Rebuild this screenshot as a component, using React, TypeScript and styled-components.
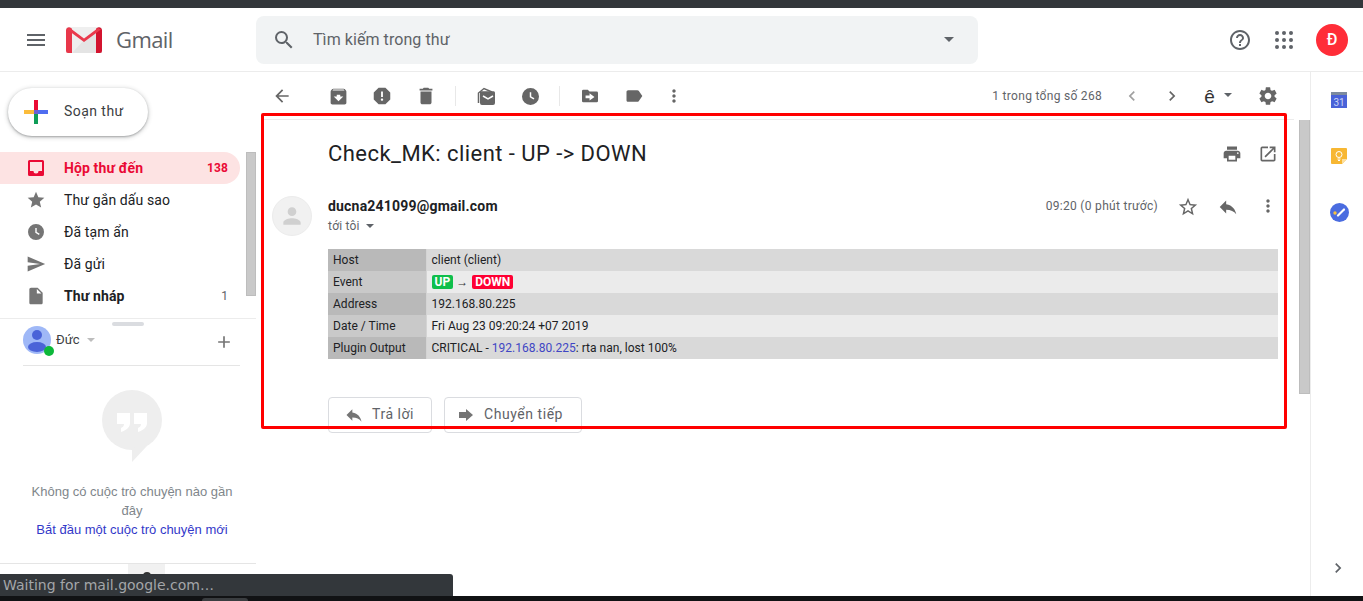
import React from "react";
import styled, { createGlobalStyle } from "styled-components";
import {
  MdMenu, MdSearch, MdHelpOutline, MdArrowBack, MdArchive, MdReport, MdDelete,
  MdLabel, MdMoreVert, MdChevronLeft, MdChevronRight, MdSettings, MdPrint, MdOpenInNew,
  MdStarBorder, MdReply, MdStar, MdSend, MdInsertDriveFile, MdAdd, MdPerson,
} from "react-icons/md";

const Global = createGlobalStyle`
  html, body { margin: 0; padding: 0; height: 100%; background: #fff; overflow: hidden; }
  body { font-family: Roboto, "Liberation Sans", sans-serif; color: #202124; }
  * { box-sizing: border-box; }
`;

const Page = styled.div`
  position: relative;
  width: 1363px;
  height: 601px;
  display: flex;
  flex-direction: column;
  overflow: hidden;
`;
const ChromeTop = styled.div`height: 8px; background: #33373b; flex: none;`;
const ChromeBottom = styled.div`
  height: 5px; background: #111214; flex: none; display: flex; align-items: flex-end; padding-left: 202px;
`;
const ChromeTab = styled.div`width: 46px; height: 3px; background: #3a3d40; border-radius: 3px 3px 0 0;`;

const Header = styled.header`
  height: 64px;
  flex: none;
  display: flex;
  align-items: center;
  border-bottom: 1px solid #ececec;
`;
const MenuSlot = styled.div`
  width: 66px; display: flex; justify-content: center; padding-left: 6px; color: #5f6368; font-size: 24px;
  svg { display: block; }
`;
const Wordmark = styled.span`
  font-family: "Open Sans", Roboto, sans-serif;
  font-size: 22px;
  line-height: 28px;
  margin-top: -2px;
  color: #5f6368;
  margin-left: 14px;
  width: 140px;
  letter-spacing: -0.6px;
`;
const SearchBox = styled.div`
  width: 722px; height: 48px; background: #f1f3f4; border-radius: 8px;
  display: flex; align-items: center; padding-left: 16px; color: #5f6368;
  svg { display: block; }
`;
const SearchText = styled.span`
  font-size: 16px; color: #5f6368; margin-left: 17px; flex: 1; letter-spacing: .07px;
`;
const Caret = styled.span<{ $size?: number; $color?: string }>`
  width: 0; height: 0; display: inline-block; flex: none;
  border-left: ${p => p.$size ?? 5}px solid transparent;
  border-right: ${p => p.$size ?? 5}px solid transparent;
  border-top: ${p => p.$size ?? 5}px solid ${p => p.$color ?? "#5f6368"};
`;
const SearchCaret = styled.span`margin-right: 24px; display: flex;`;
const HeaderRight = styled.div`
  margin-left: auto; display: flex; align-items: center; padding-right: 15px; color: #5f6368;
`;
const HeadIcon = styled.div`
  width: 44px; display: flex; justify-content: center; svg { display: block; }
`;
const UserBadge = styled.div`
  width: 32px; height: 32px; border-radius: 50%; background: #ff2d38; color: #fff; margin-left: 10px;
  display: flex; align-items: center; justify-content: center; font-size: 16px; font-weight: 500;
`;

const Body = styled.div`flex: 1; display: flex; min-height: 0;`;
const Sidebar = styled.aside`
  position: relative; width: 256px; flex: none; display: flex; flex-direction: column;
`;
const Compose = styled.div`
  margin: 16px 0 0 8px; width: 140px; height: 48px; border-radius: 24px; background: #fff;
  display: flex; align-items: center; padding-left: 16px; gap: 16px;
  box-shadow: 0 1px 2px rgba(60,64,67,.35), 0 1px 4px 1px rgba(60,64,67,.2);
  font-size: 14px; color: #3c4043; font-weight: 400; letter-spacing: .45px;
`;
const ComposeLabel = styled.span`margin-top: -2px;`;
const Nav = styled.nav`margin-top: 16px; display: flex; flex-direction: column; width: 240px;`;
const NavRow = styled.div<{ $active?: boolean; $bold?: boolean }>`
  height: 32px; display: flex; align-items: center; padding: 0 12px 0 28px; gap: 20px;
  border-radius: 0 16px 16px 0;
  font-size: 14px;
  letter-spacing: .12px;
  color: ${p => (p.$active ? "#ea0a35" : "#202124")};
  font-weight: ${p => (p.$active || p.$bold ? 700 : 400)};
  background: ${p => (p.$active ? "#fde3e3" : "transparent")};
  svg { display: block; flex: none; color: ${p => (p.$active ? "#ea0a35" : "#757575")}; }
`;
const NavCount = styled.span<{ $active?: boolean }>`
  margin-left: auto; font-size: 12px; color: ${p => (p.$active ? "#ea0a35" : "#5f6368")};
  font-weight: ${p => (p.$active ? 700 : 400)};
`;
const SideScroll = styled.div`
  position: absolute; left: 246px; top: 80px; width: 10px; height: 144px; background: #c9c9c9; border: 1px solid #bdbdbd;
`;
const Hangouts = styled.div`
  position: relative; margin-top: 6px; border-top: 1px solid #ececec; height: 47px;
  display: flex; align-items: flex-start; padding: 7px 22px 0 23px;
`;
const Grip = styled.div`
  position: absolute; left: 112px; top: 3px; width: 32px; height: 4px; border-radius: 2px; background: #dadce0;
`;
const UserPic = styled.div`
  position: relative; width: 28px; height: 28px; border-radius: 50%; background: #9fb8f7; flex: none;
`;
const Online = styled.span`
  position: absolute; left: 21px; top: 20px; width: 10px; height: 10px; border-radius: 50%; background: #0db83a;
`;
const ChatName = styled.span`
  font-size: 13px; margin-left: 5px; color: #3c4043; line-height: 15px; margin-top: 6px; margin-right: 7px;
`;
const CaretWrap = styled.span`display: flex; margin-top: 12px;`;
const AddWrap = styled.span`
  margin-left: auto; color: #757575; display: flex; margin-top: 6px; svg { display: block; }
`;
const ChatRule = styled.div`margin: 0 16px 0 23px; height: 1px; background: #e5e5e5;`;
const Empty = styled.div`
  flex: 1; display: flex; flex-direction: column; align-items: center; padding: 24px 0 0 8px;
  font-family: "Liberation Sans", Arial, sans-serif; font-size: 13px; line-height: 19px; text-align: center; color: #80868b;
`;
const EmptyText = styled.div`margin-top: 20px; width: 210px;`;
const EmptyLink = styled.div`color: #3338c9; white-space: nowrap;`;
const SideFooter = styled.div`
  height: 33px; border-top: 1px solid #e5e5e5; display: flex; justify-content: flex-start; padding-left: 128px;
`;
const FooterTab = styled.div`
  width: 37px; background: #f1f1f1; display: flex; justify-content: center; padding-top: 8px;
  &::after { content: ""; width: 8px; height: 8px; border-radius: 50%; background: #333; }
`;

const Main = styled.main`position: relative; flex: 1; min-width: 0; display: flex; flex-direction: column;`;
const Toolbar = styled.div`
  height: 47px; display: flex; align-items: center; padding: 1px 22px 0 4px; flex: none; color: #5f6368;
`;
const ToolSlot = styled.div<{ $w?: number; $ml?: number; $pr?: number; $c?: string }>`
  width: ${p => p.$w ?? 44}px; margin-left: ${p => p.$ml ?? 0}px; padding-right: ${p => p.$pr ?? 0}px; flex: none;
  display: flex; justify-content: center; align-items: center; gap: 9px; color: ${p => p.$c ?? "#666"};
  svg { display: block; }
`;
const ToolSep = styled.div<{ $ml: number; $mr: number }>`
  width: 1px; height: 20px; background: #e8e8e8; margin: 0 ${p => p.$mr}px 0 ${p => p.$ml}px; flex: none;
`;
const Pager = styled.span`
  margin-left: auto; margin-right: 10px; font-size: 12px; color: #5f6368; letter-spacing: .3px;
`;
const LangGlyph = styled.span`
  font-family: "Liberation Sans", sans-serif; font-size: 19px; color: #333; line-height: 18px; margin-top: 1px;
`;
const LangCaret = styled.span`display: flex; margin-top: -3px;`;
const Rule = styled.div`height: 1px; margin: 0 16px 0 5px; background: #ececec; flex: none;`;
const Thread = styled.div`flex: 1; min-height: 0; display: flex; flex-direction: column;`;
const SubjectRow = styled.div`
  display: flex; align-items: center; height: 28px; margin-top: 19px; padding: 0 24px 0 72px; flex: none;
`;
const Subject = styled.h1`
  margin: 1px 0 0; font-family: Roboto, sans-serif; font-weight: 400; font-size: 22px; line-height: 28px; color: #202124; flex: 1;
  letter-spacing: .45px;
`;
const MsgIcons = styled.div`display: flex; align-items: center; color: #666; margin-top: 2px; svg { display: block; }`;
const IconBox = styled.div<{ $w?: number }>`
  width: ${p => p.$w ?? 36}px; display: flex; justify-content: center; color: #666; svg { display: block; }
`;
const Message = styled.div`display: flex; padding: 29px 24px 0 16px; flex: none;`;
const Avatar = styled.div`
  width: 40px; height: 40px; border-radius: 50%; background: #f1f1f1; color: #d0d0d0;
  display: flex; align-items: center; justify-content: center; flex: none; border: 1px solid #ececec;
  svg { display: block; }
`;
const MsgBody = styled.div`margin-left: 16px; flex: 1; min-width: 0;`;
const MsgHead = styled.div`display: flex; align-items: flex-start; height: 40px;`;
const Sender = styled.div`flex: 1;`;
const SenderName = styled.div`font-size: 14px; font-weight: 700; line-height: 20px; color: #202124; letter-spacing: .2px;`;
const ToMe = styled.div`
  display: flex; align-items: center; gap: 6px; font-size: 12px; line-height: 20px; color: #5f6368; letter-spacing: .2px;
`;
const Time = styled.span`
  font-size: 12px; color: #5f6368; line-height: 20px; margin-right: 12px; letter-spacing: .3px;
`;
const MailTable = styled.table`
  margin: 13px 0 0; width: 950px; border-collapse: collapse; table-layout: fixed;
  font-size: 12px; color: #202124; letter-spacing: .02px;
`;
const HeadCell = styled.td<{ $odd: boolean }>`
  width: 98px; height: 22px; padding: 0 0 0 5px; border-right: 1px solid #d4d4d4;
  background: ${p => (p.$odd ? "#b9b9b9" : "#c9c9c9")};
`;
const ValueCell = styled.td<{ $odd: boolean }>`
  height: 22px; padding: 0 0 0 5px;
  background: ${p => (p.$odd ? "#d9d9d9" : "#ebebeb")};
`;
const Badge = styled.span<{ $c: string }>`
  display: inline-block; background: ${p => p.$c}; color: #fff; font-weight: 700; font-size: 12px;
  line-height: 14px; padding: 0 3px; border-radius: 2px;
`;
const Arrow = styled.span`
  font-size: 12px; margin: 0 4px 0 3px; font-family: "Liberation Sans", sans-serif; color: #333;
`;
const MailLink = styled.span`color: #3f46c4;`;
const Actions = styled.div`display: flex; gap: 12px; margin-top: 38px;`;
const ActionBtn = styled.div<{ $w: number; $pl: number }>`
  width: ${p => p.$w}px; height: 36px; border: 1px solid #dadce0; border-radius: 4px; background: #fff;
  display: flex; align-items: center; padding: 0 0 2px ${p => p.$pl}px; gap: 8px;
  font-size: 14px; color: #5f6368; font-weight: 400; letter-spacing: .55px;
  svg { display: block; color: #757575; flex: none; margin-top: 2px; }
`;
const MainScroll = styled.div`
  position: absolute; right: 0; top: 48px; width: 11px; height: 274px; background: #c9c9c9; border: 1px solid #bdbdbd; border-top: 0;
`;

const AddOns = styled.aside`
  width: 53px; flex: none; border-left: 1px solid #ececec; display: flex; flex-direction: column; align-items: center; padding: 18px 0 0 4px;
`;
const AddOnIcon = styled.div<{ $mt?: number }>`
  height: 20px; display: flex; align-items: center; justify-content: center; margin-top: ${p => p.$mt ?? 0}px;
  svg { display: block; }
`;
const Expand = styled.div`margin: auto 3px 18px 0; color: #5f6368; svg { display: block; }`;

const Highlight = styled.div`
  position: absolute; left: 261px; top: 113px; width: 1026px; height: 316px; border: 3px solid #ff0000; border-radius: 2px; pointer-events: none;
`;
const StatusBar = styled.div`
  position: absolute; left: 0; top: 574px; width: 453px; height: 22px; background: #33373b; border-radius: 0 3px 0 0;
  font-family: "DejaVu Sans", sans-serif; font-size: 14px; line-height: 22px; padding-left: 3px; color: #a3a6a9;
`;

const GmailLogo = () => (
  <svg width="36" height="26" viewBox="0 0 36 26" style={{ display: "block" }}>
    <path d="M2 0h32a2 2 0 0 1 2 2v24H0V2a2 2 0 0 1 2-2z" fill="#efefef" />
    <path d="M6 26l12-13 12-9 6 22z" fill="#e4e4e4" />
    <path d="M0 3a3 3 0 0 1 5-2l1 .8V26H2a2 2 0 0 1-2-2z" fill="#e8374a" />
    <path d="M36 3a3 3 0 0 0-5-2l-1 .8V26h4a2 2 0 0 0 2-2z" fill="#d3142f" />
    <path d="M4 1l14 10.5L32 1l3 1.500L18 15 1 2.500z" fill="#ea3a4d" />
  </svg>
);
const PlusMark = () => (
  <svg width="24" height="24" viewBox="0 0 24 24" style={{ display: "block", flex: "none" }}>
    <rect x="0" y="10" width="12" height="4" fill="#fbbc3b" />
    <rect x="12" y="10" width="12" height="4" fill="#4f6df0" />
    <rect x="10" y="14" width="4" height="10" fill="#0f9d58" />
    <rect x="10" y="0" width="4" height="12" fill="#ea0a35" />
    <rect x="10" y="10" width="4" height="4" fill="#6f5fd0" />
  </svg>
);
const InboxIcon = () => (
  <svg width="16" height="16" viewBox="0 0 16 16" fill="currentColor">
    <path fillRule="evenodd" d="M1.500 0h13A1.500 1.500 0 0 1 16 1.500v13a1.500 1.500 0 0 1-1.500 1.500h-13A1.500 1.500 0 0 1 0 14.500v-13A1.500 1.500 0 0 1 1.500 0zM2 2v9h3.500a2.500 2.500 0 0 0 5 0H14V2z" />
  </svg>
);
const ClockIcon = ({ s }: { s: number }) => (
  <svg width={s} height={s} viewBox="0 0 16 16" fill="currentColor">
    <path fillRule="evenodd" d="M8 0a8 8 0 1 1 0 16A8 8 0 0 1 8 0zm-.7 4v4.700l3.600 2.200.8-1.200-3-1.800V4z" />
  </svg>
);
const MailStackIcon = () => (
  <svg width="20" height="20" viewBox="0 0 20 20">
    <path d="M4 6a2 2 0 0 1 1.500-.7h12A1.500 1.500 0 0 1 19 7v10a2 2 0 0 1-2 2H6a2 2 0 0 1-2-2z" fill="currentColor" />
    <path d="M7 10l5 3 5-3" fill="none" stroke="#fff" strokeWidth="1.500" />
    <path d="M2.500 17V7L8 2.500l8 3.500" fill="none" stroke="currentColor" strokeWidth="1.500" />
  </svg>
);
const MoveIcon = () => (
  <svg width="16" height="16" viewBox="0 0 18 18" fill="currentColor">
    <path fillRule="evenodd" d="M1.500 2h5l2 2h8a1.500 1.500 0 0 1 1.500 1.500v9a1.500 1.500 0 0 1-1.500 1.500h-15A1.500 1.500 0 0 1 0 14.500v-11A1.500 1.500 0 0 1 1.500 2zM8.500 6v2.500H4v3h4.500V14L14 10z" />
  </svg>
);
const AppsIcon = () => (
  <svg width="18" height="18" viewBox="0 0 18 18" fill="currentColor">
    {[2, 9, 16].flatMap(y => [2, 9, 16].map(x => <circle key={x + "-" + y} cx={x} cy={y} r="2" />))}
  </svg>
);
const PersonIcon = () => (
  <svg width="28" height="28" viewBox="0 0 28 28" style={{ display: "block" }}>
    <circle cx="14" cy="9" r="5" fill="#4a63d8" />
    <ellipse cx="14" cy="21" rx="9" ry="5" fill="#4a63d8" />
  </svg>
);
const BubbleIcon = () => (
  <svg width="60" height="72" viewBox="0 0 60 72" style={{ display: "block" }}>
    <circle cx="30" cy="30" r="30" fill="#eeeeee" />
    <path d="M30 58v14l15-16z" fill="#eeeeee" />
    <path d="M15 23h13v10c0 4-3 7-9 9v-4c2-1 3-2 3-4h-7zM32 23h13v10c0 4-3 7-9 9v-4c2-1 3-2 3-4h-7z" fill="#fff" />
  </svg>
);
const CalendarIcon = () => (
  <svg width="16" height="16" viewBox="0 0 16 16">
    <rect x="0" y="0" width="16" height="4" fill="#7d8b9e" />
    <rect x="0" y="3" width="16" height="13" fill="#4a63d8" />
    <text x="8" y="13.500" textAnchor="middle" fontFamily="Roboto, sans-serif" fontSize="10" fill="#cdd6f6">31</text>
  </svg>
);
const KeepIcon = () => (
  <svg width="16" height="16" viewBox="0 0 16 16">
    <path d="M1 0h14a1 1 0 0 1 1 1v10l-5 5H1a1 1 0 0 1-1-1V1a1 1 0 0 1 1-1z" fill="#f7b733" />
    <path d="M11 16v-5h5z" fill="#fbe0a0" />
    <circle cx="8" cy="6.500" r="3" fill="none" stroke="#fff" strokeWidth="1" />
    <path d="M6.500 11h3M7 12.500h2" stroke="#fff" strokeWidth="1" />
  </svg>
);
const TasksIcon = () => (
  <svg width="19" height="19" viewBox="0 0 19 19">
    <circle cx="9.500" cy="9.500" r="9.500" fill="#4a6ce0" />
    <circle cx="5" cy="10" r="1.700" fill="#f7c23c" />
    <path d="M8 12.500L14 6.500" stroke="#fff" strokeWidth="2.200" strokeLinecap="round" />
  </svg>
);
const ForwardBlock = () => (
  <svg width="20" height="20" viewBox="0 0 20 20" fill="currentColor">
    <path d="M3 7h7V4l7 6-7 6v-3H3z" />
  </svg>
);

const rows: [string, React.ReactNode][] = [
  ["Host", "client (client)"],
  ["Event", <><Badge $c="#0fbf4b">UP</Badge><Arrow>→</Arrow><Badge $c="#ff0033">DOWN</Badge></>],
  ["Address", "192.168.80.225"],
  ["Date / Time", "Fri Aug 23 09:20:24 +07 2019"],
  ["Plugin Output", <>CRITICAL - <MailLink>192.168.80.225</MailLink>: rta nan, lost 100%</>],
];

export default function App() {
  return (
    <Page>
      <Global />
      <ChromeTop />
      <Header>
        <MenuSlot><MdMenu size={24} /></MenuSlot>
        <GmailLogo />
        <Wordmark>Gmail</Wordmark>
        <SearchBox>
          <MdSearch size={24} />
          <SearchText>Tìm kiếm trong thư</SearchText>
          <SearchCaret><Caret /></SearchCaret>
        </SearchBox>
        <HeaderRight>
          <HeadIcon><MdHelpOutline size={24} /></HeadIcon>
          <HeadIcon><AppsIcon /></HeadIcon>
          <UserBadge>Đ</UserBadge>
        </HeaderRight>
      </Header>
      <Body>
        <Sidebar>
          <Compose><PlusMark /><ComposeLabel>Soạn thư</ComposeLabel></Compose>
          <Nav>
            <NavRow $active><InboxIcon />Hộp thư đến<NavCount $active>138</NavCount></NavRow>
            <NavRow><MdStar size={20} style={{ margin: "0 -2px" }} />Thư gắn dấu sao</NavRow>
            <NavRow><ClockIcon s={16} />Đã tạm ẩn</NavRow>
            <NavRow><MdSend size={20} style={{ margin: "0 -2px" }} />Đã gửi</NavRow>
            <NavRow $bold><MdInsertDriveFile size={20} style={{ margin: "0 -2px" }} />Thư nháp<NavCount>1</NavCount></NavRow>
          </Nav>
          <SideScroll />
          <Hangouts>
            <Grip />
            <UserPic><PersonIcon /><Online /></UserPic>
            <ChatName>Đức</ChatName>
            <CaretWrap><Caret $size={4} $color="#bdbdbd" /></CaretWrap>
            <AddWrap><MdAdd size={20} /></AddWrap>
          </Hangouts>
          <ChatRule />
          <Empty>
            <BubbleIcon />
            <EmptyText>Không có cuộc trò chuyện nào gần đây</EmptyText>
            <EmptyLink>Bắt đầu một cuộc trò chuyện mới</EmptyLink>
          </Empty>
          <SideFooter><FooterTab /></SideFooter>
        </Sidebar>
        <Main>
          <Toolbar>
            <ToolSlot><MdArrowBack size={20} /></ToolSlot>
            <ToolSlot $ml={12}><MdArchive size={21} /></ToolSlot>
            <ToolSlot><MdReport size={22} /></ToolSlot>
            <ToolSlot><MdDelete size={22} /></ToolSlot>
            <ToolSep $ml={7} $mr={8} />
            <ToolSlot><MailStackIcon /></ToolSlot>
            <ToolSlot><ClockIcon s={17} /></ToolSlot>
            <ToolSep $ml={7} $mr={8} />
            <ToolSlot><MoveIcon /></ToolSlot>
            <ToolSlot><MdLabel size={20} /></ToolSlot>
            <ToolSlot $w={36}><MdMoreVert size={20} /></ToolSlot>
            <Pager>1 trong tổng số 268</Pager>
            <ToolSlot $w={40} $c="#a0a0a0"><MdChevronLeft size={20} /></ToolSlot>
            <ToolSlot $w={40}><MdChevronRight size={20} /></ToolSlot>
            <ToolSlot $w={56} $pr={4}>
              <LangGlyph>ê</LangGlyph>
              <LangCaret><Caret $size={4} /></LangCaret>
            </ToolSlot>
            <ToolSlot $w={40}><MdSettings size={22} /></ToolSlot>
          </Toolbar>
          <Rule />
          <Thread>
            <SubjectRow>
              <Subject>Check_MK: client - UP -&gt; DOWN</Subject>
              <MsgIcons>
                <IconBox><MdPrint size={20} /></IconBox>
                <IconBox><MdOpenInNew size={20} /></IconBox>
              </MsgIcons>
            </SubjectRow>
            <Message>
              <Avatar><MdPerson size={26} /></Avatar>
              <MsgBody>
                <MsgHead>
                  <Sender>
                    <SenderName>ducna241099@gmail.com</SenderName>
                    <ToMe>tới tôi <Caret $size={4} /></ToMe>
                  </Sender>
                  <Time>09:20 (0 phút trước)</Time>
                  <IconBox $w={36}><MdStarBorder size={22} /></IconBox>
                  <IconBox $w={44}><MdReply size={22} /></IconBox>
                  <IconBox $w={36}><MdMoreVert size={20} /></IconBox>
                </MsgHead>
                <MailTable>
                  <tbody>
                    {rows.map(([k, v], i) => (
                      <tr key={k}>
                        <HeadCell $odd={i % 2 === 0}>{k}</HeadCell>
                        <ValueCell $odd={i % 2 === 0}>{v}</ValueCell>
                      </tr>
                    ))}
                  </tbody>
                </MailTable>
                <Actions>
                  <ActionBtn $w={104} $pl={15}><MdReply size={20} />Trả lời</ActionBtn>
                  <ActionBtn $w={138} $pl={11}><ForwardBlock />Chuyển tiếp</ActionBtn>
                </Actions>
              </MsgBody>
            </Message>
          </Thread>
          <MainScroll />
        </Main>
        <AddOns>
          <AddOnIcon><CalendarIcon /></AddOnIcon>
          <AddOnIcon $mt={36}><KeepIcon /></AddOnIcon>
          <AddOnIcon $mt={36}><TasksIcon /></AddOnIcon>
          <Expand><MdChevronRight size={20} /></Expand>
        </AddOns>
      </Body>
      <ChromeBottom><ChromeTab /></ChromeBottom>
      <Highlight />
      <StatusBar>Waiting for mail.google.com…</StatusBar>
    </Page>
  );
}
